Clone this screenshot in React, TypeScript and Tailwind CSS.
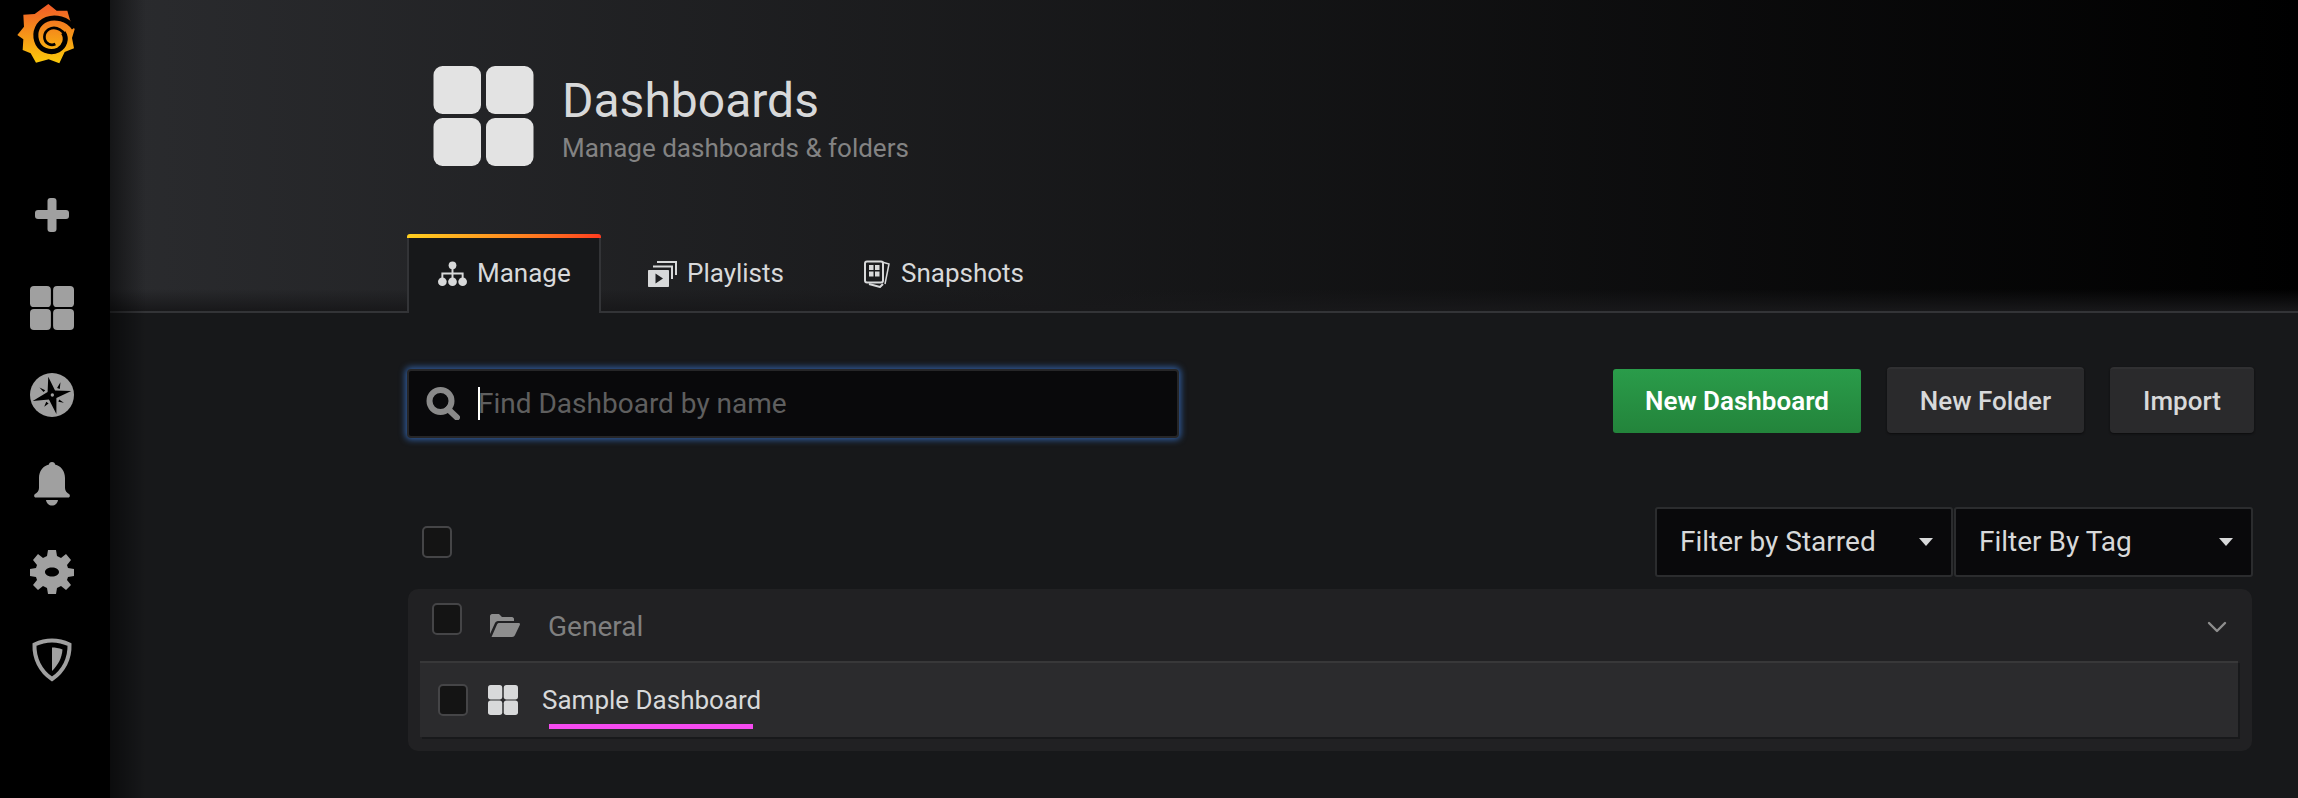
import { ChevronDown } from "lucide-react";

// four rounded squares, used in the sidebar, page header and list row
function GridIcon({ className }: { className: string }) {
  return (
    <svg viewBox="0 0 100 100" className={className} fill="currentColor">
      <rect x="0" y="0" width="47.5" height="48" rx="9" />
      <rect x="52.5" y="0" width="47.5" height="48" rx="9" />
      <rect x="0" y="52" width="47.5" height="48" rx="9" />
      <rect x="52.5" y="52" width="47.5" height="48" rx="9" />
    </svg>
  );
}

function Logo() {
  return (
    <svg viewBox="0 0 240 210" className="w-[80px] h-[70px]">
      <defs>
        <linearGradient id="sun" x1="0" y1="0" x2="0" y2="1">
          <stop offset="0" stopColor="#f05a28" />
          <stop offset="1" stopColor="#fbca0a" />
        </linearGradient>
      </defs>
      <path
        d="M115 12 L140 32 L172 32 L180 60 L194 88 L186 114 L192 145 L164 156 L148 190 L116 178 L78 188 L62 160 L38 150 L40 118 L22 105 L42 80 L40 44 L74 42 Z"
        fill="url(#sun)"
      />
      <path
        d="M192 84 C172 56 136 48 110 58 C84 68 72 96 80 122 C88 150 120 162 145 150 C164 140 172 116 160 98"
        fill="none"
        stroke="#000"
        strokeWidth="15"
      />
      <path
        d="M168 118 C166 92 138 76 116 88 C100 98 98 122 116 132 C122 135 130 135 136 132"
        fill="none"
        stroke="#000"
        strokeWidth="8"
      />
    </svg>
  );
}

function PlusIcon() {
  return (
    <svg viewBox="0 0 34 34" className="w-[34px] h-[34px]" fill="currentColor">
      <rect x="0" y="12" width="34" height="9" rx="3" />
      <rect x="12.5" y="0" width="9" height="34" rx="3" />
    </svg>
  );
}

function CompassIcon() {
  return (
    <svg viewBox="0 0 130 130" className="w-[44px] h-[44px] -mt-px">
      <circle cx="65" cy="65" r="65" fill="currentColor" />
      <path d="M54 11 L74 52 L122 53 L78 74 L78 121 L56 78 L8 83 L52 56 Z" fill="#000" />
      <path d="M90 27 L80 44 L88 47 Z M28 43 L45 51 L40 56 Z M42 100 L48 85 L55 90 Z M100 88 L86 78 L84 85 Z" fill="#000" />
      <circle cx="66" cy="65" r="5" fill="currentColor" />
    </svg>
  );
}

function BellIcon() {
  return (
    <svg viewBox="0 0 36 44" className="w-[36px] h-[44px]" fill="currentColor">
      <path d="M18 0 C20 0 21 1 21 2.5 C27 4 31 9 31 16 L31 26 C31 29 33 31 35 32 C36.5 33 36 35.5 34 35.5 L2 35.5 C0 35.5 -0.5 33 1 32 C3 31 5 29 5 26 L5 16 C5 9 9 4 15 2.5 C15 1 16 0 18 0 Z" />
      <path d="M12 38 L24 38 C23.5 41.5 21 43.5 18 43.5 C15 43.5 12.5 41.5 12 38 Z" />
    </svg>
  );
}

function GearIcon() {
  return (
    <svg viewBox="0 0 44 44" className="w-[44px] h-[44px]" fill="currentColor" fillRule="evenodd">
      <path d="M18 0 L26 0 L27 6 L31 8 L36 4 L41 10 L37 15 L38 18 L44 19 L44 26 L38 27 L37 30 L41 35 L36 40 L31 36 L27 38 L26 44 L18 44 L17 38 L13 36 L8 40 L3 35 L7 30 L6 27 L0 26 L0 19 L6 18 L7 15 L3 10 L8 4 L13 8 L17 6 Z M22 17.5 C18 17.5 15 19.5 15 22 C15 24.5 18 26.5 22 26.5 C26 26.5 29 24.5 29 22 C29 19.5 26 17.5 22 17.5 Z" />
    </svg>
  );
}

function ShieldIcon() {
  return (
    <svg viewBox="0 0 40 44" className="w-[40px] h-[44px]">
      <path
        d="M20 2.5 C26 2.5 32 4 37.5 6.5 C38 20 32 33 20 41 C8 33 2 20 2.5 6.5 C8 4 14 2.5 20 2.5 Z"
        fill="none"
        stroke="currentColor"
        strokeWidth="4"
      />
      <path d="M20 9.5 C23 9.5 27 10 30.5 11.5 C30 20 26 27 20 33 Z" fill="currentColor" />
    </svg>
  );
}

function SitemapIcon() {
  return (
    <svg viewBox="0 0 30 26" className="w-[29px] h-[26px]" fill="currentColor">
      <circle cx="15" cy="4" r="4" />
      <circle cx="4.5" cy="21" r="4.5" />
      <circle cx="15" cy="21" r="4.5" />
      <circle cx="25.5" cy="21" r="4.5" />
      <path d="M14 6 H16 V11.5 H26.5 V18 H24.5 V13.5 H16 V18 H14 V13.5 H5.5 V18 H3.5 V11.5 H14 Z" />
    </svg>
  );
}

function PlaylistIcon() {
  return (
    <svg viewBox="0 0 29 26" className="w-[29px] h-[26px]" fill="currentColor">
      <path d="M9 0 H29 V14 H27 V2 H9 Z" />
      <path d="M5 4.5 H25 V18 H23 V6.5 H5 Z" />
      <path fillRule="evenodd" d="M1 9 H20 C20.6 9 21 9.4 21 10 V25 C21 25.6 20.6 26 20 26 H1 C.4 26 0 25.6 0 25 V10 C0 9.4 .4 9 1 9 Z M7.5 12.5 V22.5 L15 17.5 Z" />
    </svg>
  );
}

function SnapshotIcon() {
  return (
    <svg viewBox="0 0 28 28" className="w-[28px] h-[28px]">
      <path d="M19 2 L26 4 L22 24" fill="none" stroke="currentColor" strokeWidth="1.5" />
      <path d="M6 24 L17 27 L20 24" fill="none" stroke="currentColor" strokeWidth="2" />
      <rect x="2" y="1.5" width="18" height="21" rx="2" fill="none" stroke="currentColor" strokeWidth="2" />
      <rect x="6" y="5" width="4.5" height="5" fill="currentColor" />
      <rect x="12" y="5" width="4.5" height="5" fill="currentColor" />
      <rect x="6" y="11.5" width="4.5" height="5" fill="currentColor" />
      <rect x="12" y="11.5" width="4.5" height="5" fill="currentColor" />
    </svg>
  );
}

function SearchIcon() {
  return (
    <svg viewBox="0 0 34 33" className="w-[34px] h-[33px]" fill="none" stroke="currentColor">
      <circle cx="14.5" cy="14" r="11" strokeWidth="6" />
      <path d="M22 22 L31 30.5" strokeWidth="6" strokeLinecap="round" />
    </svg>
  );
}

function FolderIcon() {
  return (
    <svg viewBox="0 0 30 23" className="ml-[28px] mt-[25px] w-[30px] h-[23px] text-[#8e8e8e]" fill="currentColor">
      <path d="M0 20 V2 C0 1 1 0 2 0 H9 L12 3 H22 C23 3 24 4 24 5 V7 H8 C6.5 7 5.5 8 5 9 Z" />
      <path d="M1.5 23 L7 10.5 C7.5 9.5 8 9 9.5 9 H28.5 C29.8 9 30.3 10 29.8 11 L25 21 C24.5 22.3 23.5 23 22 23 Z" />
    </svg>
  );
}

function Checkbox({ className }: { className: string }) {
  return <div className={`w-[30px] h-[32px] rounded-[5px] border-2 border-[#454547] bg-[#141414] ${className}`} />;
}

function FilterSelect({ label, className }: { label: string; className: string }) {
  return (
    <div className={`h-[70px] flex items-center justify-between pl-[23px] pr-[18px] bg-[#09090b] border-2 border-[#2b2c2e] rounded-[3px] text-[28px] text-[#d8d9da] ${className}`}>
      <span>{label}</span>
      <span className="w-0 h-0 border-x-[7px] border-x-transparent border-t-[8px] border-t-[#d8d9da]" />
    </div>
  );
}

export default function App() {
  return (
    <div className="w-[2298px] h-[798px] flex overflow-hidden bg-[#17181a] font-['Roboto',sans-serif]">
      <aside className="w-[110px] shrink-0 bg-black text-[#a0a0a0] flex flex-col items-center pr-[6px]">
        <div className="w-full pl-[10px]">
          <Logo />
        </div>
        <div className="mt-[128px]">
          <PlusIcon />
        </div>
        <GridIcon className="w-[44px] h-[44px] mt-[54px]" />
        <div className="mt-[44px] h-[44px]">
          <CompassIcon />
        </div>
        <div className="mt-[44px] h-[44px]">
          <BellIcon />
        </div>
        <div className="mt-[44px] h-[44px]">
          <GearIcon />
        </div>
        <div className="mt-[44px] h-[44px]">
          <ShieldIcon />
        </div>
      </aside>

      <main className="flex-1 min-w-0 relative">
        <div className="absolute inset-y-0 left-0 w-[36px] bg-linear-to-r from-black/50 to-transparent pointer-events-none" />

        <header className="h-[313px] border-b-2 border-[#333437] pl-[297px] pr-[44px] flex flex-col bg-[linear-gradient(0deg,#18181a_0,transparent_22px),linear-gradient(90deg,#2a2b2e,#000)]">
          <div className="pt-[66px] pl-[26px] flex items-start gap-[28px]">
            <GridIcon className="w-[101px] h-[100px] text-[#e3e3e3]" />
            <div>
              <h1 className="text-[48px] leading-[56px] mt-[7px] text-[#d8d9da]">Dashboards</h1>
              <p className="text-[26px] leading-[32px] mt-[3px] text-[#838383]">Manage dashboards &amp; folders</p>
            </div>
          </div>
          <nav className="mt-auto -mb-[2px] flex text-[26px] text-[#d8d9da]">
            <div className="w-[194px] h-[79px] bg-[#17181a] border-x-2 border-[#333437] rounded-t-[3px] relative flex items-center gap-[10px] pl-[29px]">
              <div className="absolute -left-[2px] -right-[2px] top-0 h-[4px] rounded-t-[3px] bg-linear-to-r from-[#ffd01f] to-[#ff3a1f]" />
              <SitemapIcon />
              <span>Manage</span>
            </div>
            <div className="flex items-center gap-[10px] ml-[47px]">
              <PlaylistIcon />
              <span>Playlists</span>
            </div>
            <div className="flex items-center gap-[10px] ml-[79px]">
              <SnapshotIcon />
              <span>Snapshots</span>
            </div>
          </nav>
        </header>

        <section className="pl-[297px] pr-[44px]">
          <div className="mt-[56px] h-[69px] flex items-start">
            <div className="w-[772px] h-[69px] bg-[#09090b] border-2 border-[#262628] rounded-[4px] shadow-[0_0_6px_2px_#2f5a99] flex items-center pl-[17px] text-[28px] text-[#5f5f5f]">
              <span className="text-[#8a8a8a]">
                <SearchIcon />
              </span>
              <span className="ml-[18px] h-[33px] leading-[33px] border-l-2 border-white indent-[-2px]">Find Dashboard by name</span>
            </div>
            <div className="ml-auto flex items-start gap-[26px] text-[26px] font-medium">
              <button className="w-[248px] h-[64px] rounded-[3px] bg-linear-to-b from-[#2a9c4a] to-[#23843b] text-white font-semibold">New Dashboard</button>
              <button className="w-[197px] h-[66px] -mt-[2px] rounded-[4px] bg-[#2a2a2c] border-t-2 border-[#303032] text-[#d8d9da] shadow-[0_1px_2px_#0c0c0d]">New Folder</button>
              <button className="w-[144px] h-[66px] -mt-[2px] rounded-[4px] bg-[#2a2a2c] border-t-2 border-[#303032] text-[#d8d9da] shadow-[0_1px_2px_#0c0c0d]">Import</button>
            </div>
          </div>

          <div className="mt-[69px] flex items-center">
            <Checkbox className="ml-[15px]" />
            <div className="ml-auto mr-px flex gap-px">
              <FilterSelect label="Filter by Starred" className="w-[298px]" />
              <FilterSelect label="Filter By Tag" className="w-[299px]" />
            </div>
          </div>

          <div className="mt-[12px] ml-px mr-[2px] h-[162px] rounded-[10px] bg-[#212123]">
            <div className="h-[72px] flex items-start">
              <Checkbox className="ml-[24px] mt-[14px]" />
              <FolderIcon />
              <span className="ml-[28px] mt-[21px] text-[28px] leading-[34px] text-[#7f7f7f]">General</span>
              <ChevronDown className="ml-auto mr-[19px] mt-[22px] w-[32px] h-[32px] text-[#8e8e8e]" strokeWidth={1.8} />
            </div>
            <div className="mx-[12px] w-[1818px] h-[76px] bg-[#2b2b2d] border-t-2 border-[#383839] shadow-[2px_2px_0_#18191b] flex items-center">
              <Checkbox className="ml-[18px]" />
              <GridIcon className="ml-[20px] w-[30px] h-[30px] text-[#d8d9da]" />
              <span className="ml-[24px] relative text-[26px] text-[#d8d9da]">
                Sample Dashboard
                <span className="absolute left-[7px] -bottom-[9px] w-[204px] h-[5px] bg-[#f64bf0]" />
              </span>
            </div>
          </div>
        </section>
      </main>
    </div>
  );
}
